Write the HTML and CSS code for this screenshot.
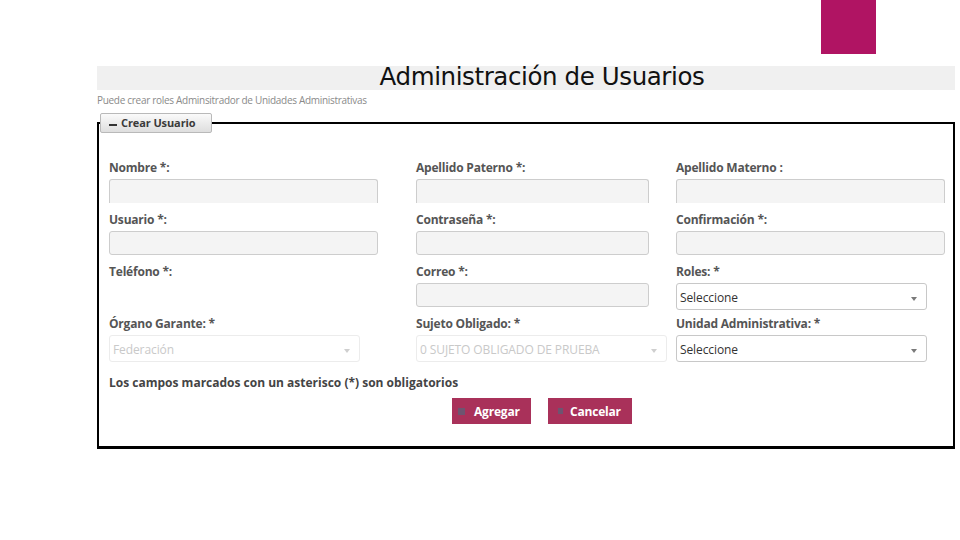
FILE: index.html
```html
<!DOCTYPE html>
<html lang="es">
<head>
<meta charset="utf-8">
<title>Administración de Usuarios</title>
<link rel="stylesheet" href="styles.css">
</head>
<body>
<div class="brand"></div>
<div class="page">
  <h1 class="title-bar"><span>Administración de Usuarios</span></h1>
  <p class="subtitle">Puede crear roles Adminsitrador de Unidades Administrativas</p>
  <fieldset class="panel">
    <legend class="legend-btn"><span class="dash"></span>Crear Usuario</legend>
    <div class="form-grid">
      <div class="field">
        <label class="lbl">Nombre *:</label>
        <div class="input w269 cut"></div>
      </div>
      <div class="field">
        <label class="lbl">Apellido Paterno *:</label>
        <div class="input w233 cut"></div>
      </div>
      <div class="field">
        <label class="lbl">Apellido Materno :</label>
        <div class="input w269 cut"></div>
      </div>

      <div class="field">
        <label class="lbl">Usuario *:</label>
        <div class="input w269"></div>
      </div>
      <div class="field">
        <label class="lbl">Contraseña *:</label>
        <div class="input w233"></div>
      </div>
      <div class="field">
        <label class="lbl">Confirmación *:</label>
        <div class="input w269"></div>
      </div>

      <div class="field">
        <label class="lbl">Teléfono *:</label>
      </div>
      <div class="field">
        <label class="lbl">Correo *:</label>
        <div class="input w233"></div>
      </div>
      <div class="field">
        <label class="lbl">Roles: *</label>
        <div class="select w251"><span>Seleccione</span><i class="caret"></i></div>
      </div>

      <div class="field">
        <label class="lbl">Órgano Garante: *</label>
        <div class="select w251 disabled"><span>Federación</span><i class="caret"></i></div>
      </div>
      <div class="field">
        <label class="lbl">Sujeto Obligado: *</label>
        <div class="select w251 disabled"><span>0 SUJETO OBLIGADO DE PRUEBA</span><i class="caret"></i></div>
      </div>
      <div class="field">
        <label class="lbl">Unidad Administrativa: *</label>
        <div class="select w251"><span>Seleccione</span><i class="caret"></i></div>
      </div>
    </div>
    <p class="note">Los campos marcados con un asterisco (*) son obligatorios</p>
    <div class="actions">
      <button class="btn btn-add"><i class="ico"></i>Agregar</button>
      <button class="btn btn-cancel"><i class="ico small"></i>Cancelar</button>
    </div>
  </fieldset>
</div>
</body>
</html>
```

FILE: styles.css
```css
html, body {
  margin: 0;
  padding: 0;
  background: #ffffff;
}
body {
  font-family: "Open Sans", "Liberation Sans", sans-serif;
  color: #333;
}
.brand {
  width: 55px;
  height: 54px;
  margin-left: 821px;
  background: #b01463;
}
.page {
  margin-left: 97px;
  width: 858px;
  padding-top: 12px;
}
.title-bar {
  margin: 0;
  height: 24px;
  background: #f0f0f0;
  text-align: center;
  padding-left: 32px;
  font-weight: 400;
  font-size: 24.5px;
  line-height: 22px;
  color: #111;
  font-family: "DejaVu Sans", "Open Sans", sans-serif;
  letter-spacing: -0.4px;
}
.subtitle {
  margin: 5px 0 0;
  font-size: 10px;
  line-height: 11px;
  color: #8a8a8a;
  height: 13px;
  letter-spacing: -0.3px;
}
.panel {
  margin: 5px 0 0;
  padding: 0 8px 22px 10px;
  border: 2px solid #000;
  border-bottom-width: 3px;
  min-width: 0;
}
.legend-btn {
  margin-left: -9px;
  width: 112px;
  height: 20px;
  box-sizing: border-box;
  border: 1px solid #b9b9b9;
  border-radius: 2px;
  background: linear-gradient(#fafafa, #dedede);
  font-size: 11px;
  font-weight: 700;
  line-height: 18px;
  color: #3a3a3a;
  padding: 0 0 0 8px;
  letter-spacing: -0.1px;
}
.dash {
  display: inline-block;
  width: 8px;
  height: 2px;
  background: #333;
  vertical-align: 1px;
  margin-right: 4px;
}
.form-grid {
  display: grid;
  grid-template-columns: 307px 260px 1fr;
  grid-auto-rows: 52px;
  padding-top: 28px;
}
.field {
  display: flex;
  flex-direction: column;
}
.lbl {
  font-size: 12px;
  line-height: 14px;
  font-weight: 700;
  color: #555;
  padding-top: 0;
  margin-bottom: 4px;
  letter-spacing: -0.2px;
}
.input {
  height: 24px;
  box-sizing: border-box;
  border: 1px solid #cdcdcd;
  border-radius: 3px;
  background: #f4f4f4;
}
.input.cut {
  border-bottom: none;
  border-radius: 3px 3px 0 0;
  height: 24px;
}
.w269 { width: 269px; }
.w233 { width: 233px; }
.w251 { width: 251px; }
.select {
  height: 27px;
  box-sizing: border-box;
  border: 1px solid #c8c8c8;
  border-radius: 3px;
  background: #fff;
  display: flex;
  align-items: center;
  justify-content: space-between;
  padding: 2px 9px 0 3px;
  font-size: 12px;
  color: #333;
  letter-spacing: -0.1px;
}
.select.disabled {
  border-color: #ececec;
  color: #c9c9c9;
}
.caret {
  width: 0;
  height: 0;
  border-left: 3px solid transparent;
  border-right: 3px solid transparent;
  border-top: 4px solid #7a7a7a;
  margin-top: 2px;
}
.select.disabled .caret {
  border-top-color: #cfcfcf;
}
.note {
  margin: 7px 0 0;
  font-size: 12px;
  line-height: 14px;
  font-weight: 700;
  color: #444;
  letter-spacing: 0;
}
.actions {
  display: flex;
  gap: 17px;
  margin-top: 8px;
  padding-left: 343px;
}
.btn {
  height: 26px;
  border: none;
  border-radius: 0;
  background: #a9315a;
  color: #fff;
  font-family: "Open Sans", "Liberation Sans", sans-serif;
  font-size: 12px;
  font-weight: 700;
  display: flex;
  align-items: center;
  padding: 0 10px 0 6px;
  letter-spacing: -0.2px;
}
.btn-add { width: 79px; }
.btn-cancel { width: 84px; padding-left: 10px; }
.ico {
  display: inline-block;
  width: 7px;
  height: 7px;
  background: #6e5470;
  margin-right: 9px;
}
.ico.small {
  width: 5px;
  height: 6px;
  margin-right: 7px;
}
```
